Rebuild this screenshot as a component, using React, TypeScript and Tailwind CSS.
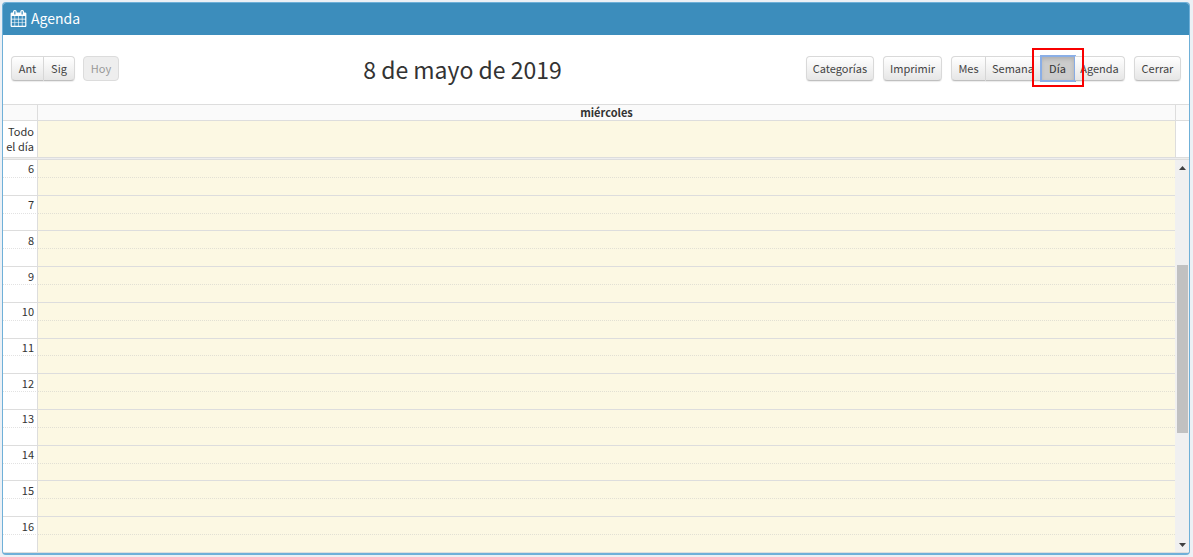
import clsx from "clsx";
import { useState } from "react";

const hours = [6, 7, 8, 9, 10, 11, 12, 13, 14, 15, 16];

const views = [
  { id: "month", label: "Mes", width: "w-[35px]" },
  { id: "week", label: "Semana", width: "w-[55px]" },
  { id: "day", label: "Día", width: "w-[34px]" },
  { id: "agenda", label: "Agenda", width: "w-[50px]" },
];

const buttonBase =
  "h-[25px] border border-[#d9d9d9] border-b-[#bfbfbf] bg-linear-to-b from-white to-[#e6e6e6] pb-[2px] text-center text-[11px] leading-[20px] whitespace-nowrap text-[#444] shadow-[0_1px_1px_rgba(0,0,0,0.08)]";

function CalendarIcon() {
  return (
    <svg viewBox="0 0 1792 1792" className="size-[17px] fill-current" aria-hidden="true">
      <path d="M192 1664h288v-288h-288v288zm352 0h320v-288h-320v288zm-352-352h288v-320h-288v320zm352 0h320v-320h-320v320zm-352-384h288v-288h-288v288zm736 736h320v-288h-320v288zm-384-736h320v-288h-320v288zm768 736h288v-288h-288v288zm-384-352h320v-320h-320v320zm-352-864v-288q0-13-9.5-22.5t-22.5-9.5h-64q-13 0-22.5 9.5t-9.5 22.5v288q0 13 9.5 22.5t22.5 9.5h64q13 0 22.5-9.5t9.5-22.5zm736 864h288v-320h-288v320zm-384-384h320v-288h-320v288zm384 0h288v-288h-288v288zm32-480v-288q0-13-9.5-22.5t-22.5-9.5h-64q-13 0-22.5 9.5t-9.5 22.5v288q0 13 9.5 22.5t22.5 9.5h64q13 0 22.5-9.5t9.5-22.5zm384-64v1280q0 52-38 90t-90 38h-1408q-52 0-90-38t-38-90v-1280q0-52 38-90t90-38h128v-96q0-66 47-113t113-47h64q66 0 113 47t47 113v96h384v-96q0-66 47-113t113-47h64q66 0 113 47t47 113v96h128q52 0 90 38t38 90z" />
    </svg>
  );
}

function Toolbar() {
  const [view, setView] = useState("day");

  return (
    <div className="flex h-[69px] items-center justify-between px-2 pb-[2px]">
      <div className="flex gap-2">
        <div className="flex">
          <button type="button" className={clsx(buttonBase, "w-[33px] rounded-l-[4px]")}>Ant</button>
          <button type="button" className={clsx(buttonBase, "w-[31px] rounded-r-[4px] border-l-0")}>Sig</button>
        </div>
        <button
          type="button"
          disabled
          className="h-[25px] w-[36px] rounded-[4px] border border-[#dcdcdc] bg-[#eee] pb-[2px] text-[11px] leading-[20px] text-[#999]"
        >
          Hoy
        </button>
      </div>

      <h2 className="text-[23px] leading-[36px] text-[#333]">8 de mayo de 2019</h2>

      <div className="flex gap-[9px]">
        <button type="button" className={clsx(buttonBase, "w-[68px] rounded-[4px]")}>Categorías</button>
        <button type="button" className={clsx(buttonBase, "w-[59px] rounded-[4px]")}>Imprimir</button>
        <div className="flex">
          {views.map((item) => (
            <div key={item.id} className="relative flex">
              <button
                type="button"
                aria-pressed={view === item.id}
                onClick={() => setView(item.id)}
                className={clsx(
                  item.width,
                  "h-[25px] border-y border-r pb-[2px] text-center text-[11px] leading-[20px] whitespace-nowrap",
                  item.id === "month" && "rounded-l-[4px] border-l",
                  item.id === "agenda" && "rounded-r-[4px]",
                  view === item.id
                    ? "border-[#bbb] bg-[#ccc] text-[#333] shadow-[inset_0_2px_4px_rgba(0,0,0,0.15)] outline-2 -outline-offset-1 outline-[#8aaee6]"
                    : "border-[#d9d9d9] border-b-[#bfbfbf] bg-linear-to-b from-white to-[#e6e6e6] text-[#444] shadow-[0_1px_1px_rgba(0,0,0,0.08)]"
                )}
              >
                {item.label}
              </button>
              {item.id === "day" && (
                <span className="pointer-events-none absolute -inset-x-[9px] -top-2 z-10 h-[39px] border-2 border-[#f80000]" />
              )}
            </div>
          ))}
        </div>
        <button type="button" className={clsx(buttonBase, "w-[47px] rounded-[4px]")}>Cerrar</button>
      </div>
    </div>
  );
}

function Scrollbar() {
  return (
    <div className="flex w-[14px] shrink-0 flex-col items-center bg-[#f0f0f0] pt-[6px] pb-[5px]">
      <svg viewBox="0 0 7 4" className="h-1 w-[7px] shrink-0 fill-[#404040]" aria-hidden="true">
        <path d="M0 4L3.5 0L7 4z" />
      </svg>
      <div className="mt-[95px] h-[168px] w-[11px] bg-[#c1c1c1]" />
      <svg viewBox="0 0 7 4" className="mt-auto h-1 w-[7px] shrink-0 fill-[#404040]" aria-hidden="true">
        <path d="M0 0L3.5 4L7 0z" />
      </svg>
    </div>
  );
}

function DayGrid() {
  return (
    <div className="text-[11px] text-[#333]">
      <table className="w-full table-fixed border-separate border-spacing-0">
        <colgroup>
          <col className="w-[35px]" />
          <col />
          <col className="w-[13px]" />
        </colgroup>
        <thead>
          <tr className="h-[16px] bg-[#fafafa] leading-[15px]">
            <td className="border-t border-r border-[#ddd] p-0" />
            <th scope="col" className="border-t border-r border-[#ddd] p-0 text-center font-bold">miércoles</th>
            <td className="border-t border-[#ddd] p-0" />
          </tr>
        </thead>
        <tbody>
          <tr className="h-[37px]">
            <th scope="row" className="border-t border-r border-[#ddd] p-0 pr-[3px] text-right font-normal whitespace-nowrap leading-[15px]">
              Todo<br />el día
            </th>
            <td className="border-t border-r border-[#ddd] bg-[#fcf8e3] p-0" />
            <td className="border-t border-[#ddd] p-0" />
          </tr>
        </tbody>
      </table>
      <div className="h-[3px] border-y border-[#ddd] bg-[#eee]" />
      <div className="flex h-[392px]">
        <table className="h-full min-w-0 flex-1 table-fixed border-separate border-spacing-0">
          <colgroup>
            <col className="w-[35px]" />
            <col />
          </colgroup>
          {hours.map((hour) => (
            <tbody key={hour} className="group">
              <tr>
                <th scope="row" className="border-t border-r border-[#ddd] p-0 pr-[3px] text-right font-normal leading-[16px] group-first-of-type:border-t-0">
                  {hour}
                </th>
                <td className="border-t border-[#ddd] bg-[#fcf8e3] p-0 group-first-of-type:border-t-0" />
              </tr>
              <tr>
                <td className="border-t border-r border-dotted border-t-[#e2e2e2] border-r-[#ddd] p-0 leading-[16px] [border-right-style:solid]">&nbsp;</td>
                <td className="border-t border-dotted border-[#e2e0d4] bg-[#fcf8e3] p-0" />
              </tr>
            </tbody>
          ))}
        </table>
        <Scrollbar />
      </div>
      <div className="border-t border-[#ddd]" />
    </div>
  );
}

export default function App() {
  return (
    <main className="min-h-screen bg-[#ecf0f5] pt-[2px] pr-[3px] pl-[2px] font-['Noto_Sans_CJK_SC','Noto_Sans',sans-serif]">
      <section className="overflow-hidden rounded-[4px] border border-b-2 border-[#6fb0d8] bg-white">
        <header className="-mt-px flex h-[33px] items-center gap-1 bg-[#3c8dbc] px-[7px] text-white">
          <CalendarIcon />
          <h1 className="pb-[2px] text-[14px] leading-[18px]">Agenda</h1>
        </header>
        <Toolbar />
        <DayGrid />
      </section>
    </main>
  );
}
